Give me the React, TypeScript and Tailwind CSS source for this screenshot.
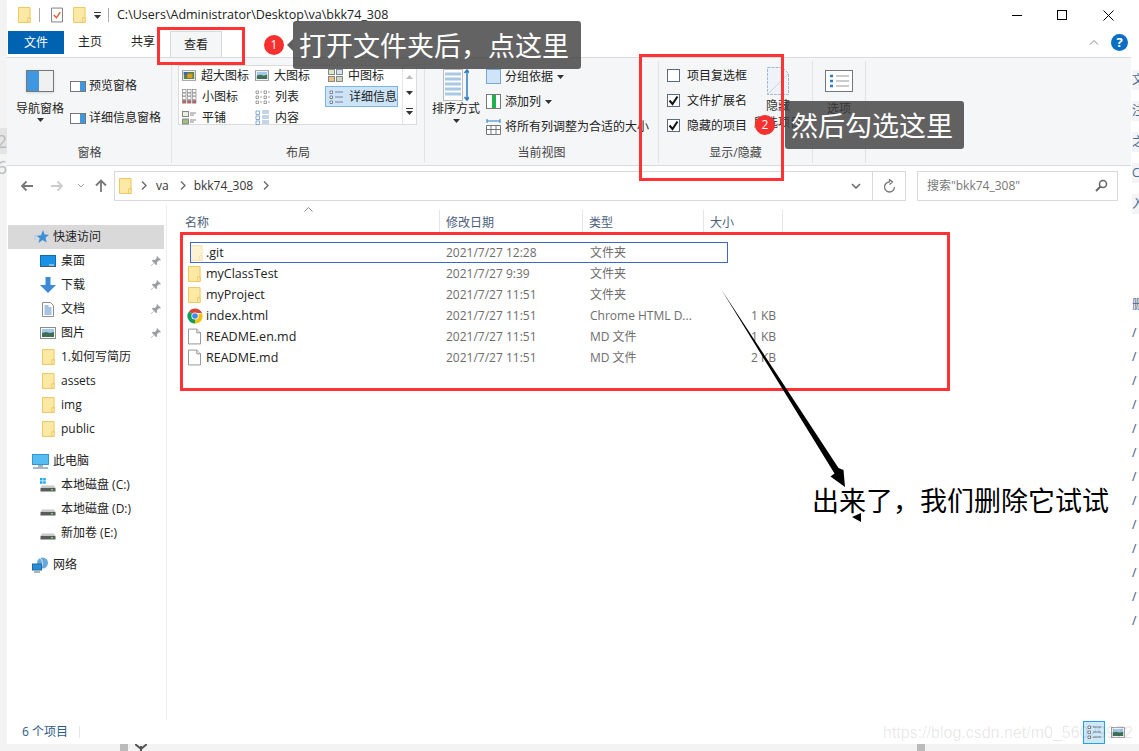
import React from "react";

const F = '[font-family:"Open_Sans","Noto_Sans_CJK_SC",sans-serif]';

const Folder = ({ faded = false }: { faded?: boolean }) => (
  <svg width="13" height="16" viewBox="0 0 14 17" className={faded ? "opacity-50 shrink-0" : "shrink-0"}>
    <path d="M.5.5h12.5v16H.5z" fill="#fde9a6" stroke="#eac451" />
    <path d="M10.5 16.5v-5h2.5v5z" fill="#fff3c8" stroke="#eac451" />
  </svg>
);
const FileIcon = () => (
  <svg width="13" height="17" viewBox="0 0 14 17" className="shrink-0">
    <path d="M.5.5h9l4 4v12H.5z" fill="#fff" stroke="#8f8f8f" />
    <path d="M9.5.5v4h4" fill="#eee" stroke="#8f8f8f" />
  </svg>
);
const Chrome = () => (
  <svg width="16" height="16" viewBox="0 0 16 16" className="shrink-0 ml-[-1px]">
    <path d="M8 8 2 3.4A7.6 7.6 0 0 1 15 5H8z" fill="#db4437" />
    <path d="M8 8 15 5a7.6 7.6 0 0 1-7 10.6z" fill="#f4c20d" />
    <path d="M8 8v7.6A7.6 7.6 0 0 1 2 3.4z" fill="#0f9d58" />
    <circle cx="8" cy="8" r="3.6" fill="#fff" />
    <circle cx="8" cy="8" r="2.8" fill="#4285f4" />
  </svg>
);
const Pin = () => (
  <svg width="12" height="12" viewBox="0 0 12 12" className="shrink-0">
    <path d="M7 1l4 4-1 .6-1-.4-2 2 .1 2-1 1-2-2.2L1.500 11 1 10.500l3-2.700L1.800 5.800l1-1 2 .1 2-2-.4-1z" fill="#9a9fa6" />
  </svg>
);
const Star = () => (
  <svg width="16" height="16" viewBox="0 0 16 16" className="shrink-0">
    <path d="M9 1l1.500 4.500 4.500.3-3.500 3 1.200 4.700L8.500 11 4.500 14l1.200-4.700-3-2.500 4.300-.6z" fill="#3c8fd8" />
    <path d="M0 7h3M0 10h2" stroke="#9cc7ec" />
  </svg>
);
const Desktop = () => (
  <svg width="16" height="13" viewBox="0 0 16 13" className="shrink-0">
    <rect x=".5" y=".5" width="15" height="11" fill="#1b90e4" stroke="#0b6cb4" />
    <path d="M1 11.500h14" stroke="#555" />
    <path d="M9 10h5" stroke="#d7efff" />
  </svg>
);
const Down = () => (
  <svg width="16" height="16" viewBox="0 0 16 16" className="shrink-0">
    <path d="M5.500 0h5v8H16l-8 8-8-8h5.500z" fill="#3a8ad8" />
  </svg>
);
const Doc = () => (
  <svg width="12" height="15" viewBox="0 0 12 15" className="shrink-0 ml-[2px]">
    <path d="M.5.500h8l3 3v11H.5z" fill="#fff" stroke="#8d8d8d" />
    <path d="M2.500 4h4M2.500 6h7M2.500 8h7M2.500 10h7M2.500 12h7" stroke="#4b87c7" />
  </svg>
);
const Pic = ({ w = 16, h = 12 }: { w?: number; h?: number }) => (
  <svg width={w} height={h} viewBox="0 0 16 12" className="shrink-0">
    <rect x=".5" y=".5" width="15" height="11" fill="#fff" stroke="#8d8d8d" />
    <rect x="2" y="2" width="12" height="4" fill="#9ec9e8" />
    <path d="M2 6l4-1 4 1 4-1v5H2z" fill="#3f6f57" />
  </svg>
);
const PC = () => (
  <svg width="17" height="15" viewBox="0 0 17 15" className="shrink-0">
    <rect x=".5" y=".5" width="16" height="10" fill="#55bdf2" stroke="#3b95cc" />
    <path d="M6 12h5M1 14h15" stroke="#8aa0b0" strokeWidth="1.300" />
    <path d="M8.500 10.500v2" stroke="#8aa0b0" />
  </svg>
);
const Drive = ({ win = false }: { win?: boolean }) => (
  <svg width="16" height="14" viewBox="0 0 16 14" className="shrink-0">
    {win && <path d="M0 0h2.500v2.500H0zM3.200 0h2.500v2.500H3.200zM0 3.200h2.500v2.500H0zM3.200 3.200h2.500v2.500H3.200z" fill="#19a8ee" />}
    <path d="M2 7.500h12l1.500 2.500H.5z" fill="#c8c8c8" />
    <rect x=".5" y="10" width="15" height="3.500" fill="#5b5b5b" />
    <rect x="11" y="11" width="2" height="1.500" fill="#5fe05f" />
  </svg>
);
const Net = () => (
  <svg width="17" height="16" viewBox="0 0 17 16" className="shrink-0">
    <circle cx="10.500" cy="6" r="5.500" fill="#68a9dc" />
    <path d="M8 1c3 2 3 7 1 10" stroke="#d8ecf8" fill="none" />
    <rect x=".5" y="7" width="9" height="6" fill="#2c8dd0" stroke="#1c6ca8" />
    <path d="M2 15h6" stroke="#667" />
  </svg>
);
const GridIcon = ({ kind }: { kind: string }) => {
  if (kind === "xl")
    return (
      <svg width="14" height="11" viewBox="0 0 16 12" className="shrink-0">
        <rect x=".5" y=".5" width="15" height="11" fill="#fff" stroke="#8d8d8d" />
        <rect x="2" y="2" width="12" height="8" fill="#5d7f4a" />
        <path d="M6 4h6v5H6z" fill="#d8a020" />
        <path d="M2 2h4v3H2z" fill="#3566b8" />
      </svg>
    );
  if (kind === "l") return <Pic w={14} h={11} />;
  if (kind === "m")
    return (
      <svg width="15" height="13" viewBox="0 0 15 13" className="shrink-0">
        <rect x=".5" y=".5" width="6" height="5" fill="#dbe8c8" stroke="#888" />
        <rect x="8.500" y=".5" width="6" height="5" fill="#cfe1f2" stroke="#888" />
        <rect x=".5" y="7.500" width="6" height="5" fill="#f0c080" stroke="#888" />
        <rect x="8.500" y="7.500" width="6" height="5" fill="#c9d8c0" stroke="#888" />
      </svg>
    );
  if (kind === "s")
    return (
      <svg width="15" height="15" viewBox="0 0 15 15" className="shrink-0">
        {[0, 1, 2, 3].flatMap((r) =>
          [0, 1, 2].map((c) => (
            <rect key={`${r}${c}`} x={c * 5 + 0.5} y={r * 3.6 + 0.5} width="3.500" height="2.800" fill={r === 3 ? "#c55" : "#fff"} stroke="#888" strokeWidth=".7" />
          ))
        )}
      </svg>
    );
  if (kind === "list")
    return (
      <svg width="15" height="14" viewBox="0 0 15 14" className="shrink-0">
        {[0, 1, 2].flatMap((r) =>
          [0, 8].map((c) => (
            <path key={`${r}${c}`} d={`M${c + 1} ${r * 5 + 1}h2.500v2.500H${c + 1}zM${c + 5} ${r * 5 + 2}h2`} fill="#fff" stroke="#888" strokeWidth=".8" />
          ))
        )}
      </svg>
    );
  if (kind === "detail")
    return (
      <svg width="15" height="14" viewBox="0 0 15 14" className="shrink-0">
        {[0, 1, 2].map((r) => (
          <path key={r} d={`M1 ${r * 5 + 1}h2.500v2.500H1zM6 ${r * 5 + 2}h8`} fill="#fff" stroke="#667" strokeWidth=".8" />
        ))}
      </svg>
    );
  if (kind === "tile")
    return (
      <svg width="15" height="14" viewBox="0 0 15 14" className="shrink-0">
        <rect x=".5" y=".5" width="6" height="5" fill="#e8efe0" stroke="#888" />
        <rect x=".5" y="8" width="6" height="5" fill="#9cc080" stroke="#888" />
        <path d="M8 2h6M8 4h4M8 9h6M8 11h4" stroke="#888" />
      </svg>
    );
  return (
    <svg width="15" height="15" viewBox="0 0 15 15" className="shrink-0">
      {[0, 1, 2].map((r) => (
        <path key={r} d={`M1 ${r * 5 + 1}h3.500v3.500H1zM7 ${r * 5 + 1}h7M7 ${r * 5 + 3}h7`} fill="#fff" stroke="#6d94c4" strokeWidth=".8" />
      ))}
    </svg>
  );
};

const Caret = () => (
  <svg width="7" height="4" viewBox="0 0 7 4" className="shrink-0">
    <path d="M0 0h7L3.500 4z" fill="#333" />
  </svg>
);

const Group = ({ w, label, children }: { w: string; label?: string; children: React.ReactNode }) => (
  <div className={`${w} shrink-0 flex flex-col h-[102px] mt-[3px] border-r border-[#e2e3e4]`}>
    <div className="h-[81px] flex">{children}</div>
    {label && <div className="h-[21px] flex items-center justify-center text-[#444] text-[12px] leading-none">{label}</div>}
  </div>
);

const Gallery = ({ kind, label, active = false }: { kind: string; label: string; active?: boolean }) => (
  <div className={`w-[73px] h-[21px] flex items-center gap-[5px] pl-[3px] text-[12px] leading-none text-[#222] whitespace-nowrap ${active ? "bg-[#cce4f7] border border-[#7fb4e6] pl-[2px]" : ""}`}>
    <GridIcon kind={kind} />
    <span>{label}</span>
  </div>
);

const Check = ({ checked, label }: { checked: boolean; label: string }) => (
  <div className="h-[25px] flex items-center gap-[7px] text-[12px] leading-none text-[#222]">
    <div className="w-[13px] h-[13px] border border-[#5c6a80] bg-white flex items-center justify-center">
      {checked && (
        <svg width="11" height="11" viewBox="0 0 11 11">
          <path d="M1.500 5.500l3 3.500 5-7.500" fill="none" stroke="#111" strokeWidth="2" />
        </svg>
      )}
    </div>
    <span>{label}</span>
  </div>
);

const Side = ({ icon, label, pin = false, indent = "pl-[33px]", col = "w-[21px]" }: { icon: React.ReactNode; label: string; pin?: boolean; indent?: string; col?: string }) => (
  <div className={`h-[24px] flex items-center ${indent} pr-[4px] text-[12px] leading-none text-[#222] whitespace-nowrap`}>
    <div className={`${col} flex items-center justify-start`}>{icon}</div>
    <span className="flex-1">{label}</span>
    {pin && <Pin />}
  </div>
);

const rows = [
  { n: ".git", d: "2021/7/27 12:28", t: "文件夹", s: "", i: <Folder faded /> },
  { n: "myClassTest", d: "2021/7/27 9:39", t: "文件夹", s: "", i: <Folder /> },
  { n: "myProject", d: "2021/7/27 11:51", t: "文件夹", s: "", i: <Folder /> },
  { n: "index.html", d: "2021/7/27 11:51", t: "Chrome HTML D...", s: "1 KB", i: <Chrome /> },
  { n: "README.en.md", d: "2021/7/27 11:51", t: "MD 文件", s: "1 KB", i: <FileIcon /> },
  { n: "README.md", d: "2021/7/27 11:51", t: "MD 文件", s: "2 KB", i: <FileIcon /> },
];

const Chevron = () => (
  <svg width="6" height="9" viewBox="0 0 6 9" className="shrink-0">
    <path d="M1 .5l4 4-4 4" fill="none" stroke="#666" strokeWidth="1.300" />
  </svg>
);

const Col = ({ w, label }: { w: string; label: string }) => (
  <div className={`${w} h-[25px] border-r border-[#e5e5e5] pl-[6px] flex items-center text-[12px] leading-none text-[#4c607a]`}>{label}</div>
);

export default function App() {
  return (
    <div className={`w-[1139px] h-[751px] relative overflow-hidden bg-[#f3f3f3] flex flex-col ${F}`}>
      <div className="h-[744px] flex">
        {/* left strip */}
        <div className="w-[7px] shrink-0 pt-[128px] text-[18px] leading-[26px] text-[#bbb] overflow-hidden flex flex-col items-end">
          <div className="bg-[#e4e4e4]">2</div>
          <div>6</div>
        </div>
        {/* window */}
        <div className="w-[1124px] shrink-0 bg-white flex flex-col">
          <div className="h-[30px] flex items-center pl-[11px] text-[12.5px] leading-none text-[#222]">
            <Folder />
            <div className="w-px h-[14px] bg-[#aaa] ml-[8px] mr-[11px]" />
            <svg width="12" height="16" viewBox="0 0 13 16" className="shrink-0">
              <path d="M.5.500h12v15H.5z" fill="#fff" stroke="#777" />
              <path d="M3 8l3 3 4-6" fill="none" stroke="#e0562a" strokeWidth="1.500" />
            </svg>
            <div className="w-[10px]" />
            <Folder />
            <div className="ml-[8px] flex flex-col gap-[2px] items-center">
              <div className="w-[7px] h-px bg-[#333]" />
              <Caret />
            </div>
            <div className="w-px h-[14px] bg-[#aaa] ml-[7px] mr-[8px]" />
            <span>C:\Users\Administrator\Desktop\va\bkk74_308</span>
            <div className="flex-1" />
            <div className="w-[45px] flex justify-center"><div className="w-[10px] h-px bg-black" /></div>
            <div className="w-[46px] flex justify-center"><div className="w-[10px] h-[10px] border border-black" /></div>
            <div className="w-[46px] flex justify-center">
              <svg width="11" height="11" viewBox="0 0 11 11"><path d="M.5.500l10 10M10.500.500l-10 10" stroke="#000" /></svg>
            </div>
          </div>
          {/* tabs */}
          <div className="h-[27px] flex items-start text-[12px] leading-none">
            <div className="w-[56px] h-[23px] mt-px ml-px bg-[#0063b1] text-white flex items-center justify-center">文件</div>
            <div className="w-[52px] h-[24px] flex items-center justify-center text-[#222]">主页</div>
            <div className="w-[54px] h-[24px] flex items-center justify-center text-[#222]">共享</div>
            <div className="w-[52px] h-[27px] mt-px bg-[#f5f6f7] border border-b-0 border-[#dadbdc] flex items-center justify-center text-[#222]">查看</div>
            <div className="flex-1" />
            <div className="h-[24px] flex items-center gap-[12px] mr-[3px]">
              <svg width="10" height="6" viewBox="0 0 10 6"><path d="M1 5.500l4-4 4 4" fill="none" stroke="#888" /></svg>
              <div className="w-[17px] h-[17px] rounded-full bg-[#0a6fc2] text-white text-[13px] font-bold flex items-center justify-center">?</div>
            </div>
          </div>
          {/* ribbon */}
          <div className="h-[109px] bg-[#f5f6f7] border-t border-b border-[#dadbdc] flex pl-px">
            <Group w="w-[164px]" label="窗格">
              <div className="w-[64px] shrink-0 flex flex-col items-center pt-[9px] text-[12px] leading-none text-[#222]">
                <div className="w-[28px] h-[22px] border border-[#777] flex bg-white shadow-sm">
                  <div className="w-[12px] bg-[#3f97e0]" />
                  <div className="flex-1 bg-[#f0f0f0]" />
                </div>
                <div className="mt-[11px] whitespace-nowrap">导航窗格</div>
                <div className="mt-[3px]"><Caret /></div>
              </div>
              <div className="flex flex-col pt-[15px] ml-[-2px] gap-[12px] text-[12px] leading-none text-[#222]">
                <div className="h-[20px] flex items-center gap-[3px]">
                  <div className="w-[16px] h-[11px] border border-[#777] bg-white flex justify-end"><div className="w-[5px] bg-[#3f97e0]" /></div>
                  <span>预览窗格</span>
                </div>
                <div className="h-[20px] flex items-center gap-[3px]">
                  <div className="w-[16px] h-[11px] border border-[#777] bg-white flex justify-end"><div className="w-[5px] bg-[#3f97e0]" /></div>
                  <span>详细信息窗格</span>
                </div>
              </div>
            </Group>
            <Group w="w-[253px]" label="布局">
              <div className="ml-[6px] mt-[4px] w-[239px] h-[60px] border border-[#dcdcdc] bg-white flex">
                <div className="w-[223px] flex flex-wrap content-start mt-[-1px]">
                  <Gallery kind="xl" label="超大图标" />
                  <Gallery kind="l" label="大图标" />
                  <Gallery kind="m" label="中图标" />
                  <Gallery kind="s" label="小图标" />
                  <Gallery kind="list" label="列表" />
                  <Gallery kind="detail" label="详细信息" active />
                  <Gallery kind="tile" label="平铺" />
                  <Gallery kind="content" label="内容" />
                </div>
                <div className="flex-1 border-l border-[#e6e6e6] flex flex-col items-center justify-around py-[3px]">
                  <svg width="7" height="4" viewBox="0 0 7 4"><path d="M0 4h7L3.500 0z" fill="#bbb" /></svg>
                  <Caret />
                  <div className="flex flex-col items-center gap-[2px]"><div className="w-[7px] h-px bg-[#333]" /><Caret /></div>
                </div>
              </div>
            </Group>
            <Group w="w-[234px]" label="当前视图">
              <div className="w-[62px] shrink-0 flex flex-col items-center pt-[8px] text-[12px] leading-none text-[#222]">
                <svg width="26" height="37" viewBox="0 0 26 37">
                  <rect x=".5" y=".5" width="19" height="31" fill="#fff" stroke="#bbb" />
                  <path d="M2 5h16M2 10h16M2 15h16M2 20h16M2 25h16" stroke="#a9c8e6" strokeWidth="3" />
                  <path d="M24 1v30M21.500 4L24 1l2.500 3M21.500 28L24 31l2.500-3" fill="none" stroke="#2b7cc4" strokeWidth="1.500" />
                </svg>
                <div className="mt-[-3px] whitespace-nowrap">排序方式</div>
                <div className="mt-[4px]"><Caret /></div>
              </div>
              <div className="flex flex-col ml-[-1px] text-[12px] leading-none text-[#222] whitespace-nowrap pt-[3px]">
                <div className="h-[25px] flex items-center gap-[4px]">
                  <div className="w-[15px] h-[15px] border border-[#7ba6d0] bg-[#cfe4f7]" />
                  <span>分组依据</span>
                  <Caret />
                </div>
                <div className="h-[25px] flex items-center gap-[4px]">
                  <div className="w-[15px] h-[15px] border border-[#777] bg-white flex justify-center"><div className="w-[4px] bg-[#22b14c]" /></div>
                  <span>添加列</span>
                  <Caret />
                </div>
                <div className="h-[25px] flex items-center gap-[4px]">
                  <svg width="15" height="17" viewBox="0 0 15 17" className="shrink-0">
                    <path d="M1 3h13M1 1v4M14 1v4" stroke="#2b7cc4" fill="none" />
                    <path d="M.5 7.500h14v9H.5zM.5 11.500h14M5 7.500v9M10 7.500v9" stroke="#777" fill="#fff" />
                  </svg>
                  <span>将所有列调整为合适的大小</span>
                </div>
              </div>
            </Group>
            <Group w="w-[154px]" label="显示/隐藏">
              <div className="pl-[8px] pt-[2px] w-[98px] shrink-0 whitespace-nowrap">
                <Check checked={false} label="项目复选框" />
                <Check checked label="文件扩展名" />
                <Check checked label="隐藏的项目" />
              </div>
              <div className="w-[42px] shrink-0 flex flex-col items-center pt-[6px] text-[12px] leading-[17px] text-[#333] whitespace-nowrap">
                <svg width="22" height="28" viewBox="0 0 22 28" className="shrink-0">
                  <path d="M.5.500h15l6 6v21H.5z" fill="#eef3fa" stroke="#aab8cc" strokeDasharray="3 1" />
                  <path d="M1 27L21 7" stroke="#c8d4e4" />
                </svg>
                <div className="mt-[2px]">隐藏</div>
                <div>所选项目</div>
              </div>
            </Group>
            <Group w="w-[53px]">
              <div className="w-full flex flex-col items-center pt-[9px] text-[12px] leading-none text-[#222]">
                <svg width="28" height="22" viewBox="0 0 28 22">
                  <rect x=".5" y=".5" width="27" height="21" fill="#fff" stroke="#777" />
                  <path d="M5 6h3M5 11h3M5 16h3" stroke="#2b7cc4" strokeWidth="2.500" />
                  <path d="M11 6h13M11 11h13M11 16h13" stroke="#999" />
                </svg>
                <div className="mt-[11px]">选项</div>
              </div>
            </Group>
          </div>
          {/* address */}
          <div className="h-[39px] flex items-center text-[12px] leading-none">
            <div className="w-[107px] flex items-center pl-[13px] shrink-0">
              <svg width="14" height="12" viewBox="0 0 14 12" className="shrink-0"><path d="M13 6H2M6.500 1.500L2 6l4.500 4.500" fill="none" stroke="#777" strokeWidth="1.800" /></svg>
              <svg width="14" height="12" viewBox="0 0 14 12" className="ml-[16px] shrink-0"><path d="M1 6h11M7.500 1.500L12 6l-4.500 4.500" fill="none" stroke="#ccc" strokeWidth="1.800" /></svg>
              <svg width="8" height="5" viewBox="0 0 8 5" className="ml-[13px] shrink-0"><path d="M1 1l3 3 3-3" fill="none" stroke="#aaa" /></svg>
              <svg width="12" height="13" viewBox="0 0 12 13" className="ml-[10px] shrink-0"><path d="M6 13V2M1 6.500L6 1.500l5 5" fill="none" stroke="#777" strokeWidth="1.800" /></svg>
            </div>
            <div className="w-[792px] h-[30px] border border-[#d9d9d9] flex items-center pl-[4px] text-[#333] shrink-0">
              <Folder />
              <div className="ml-[9px]"><Chevron /></div>
              <span className="ml-[9px]">va</span>
              <div className="ml-[11px]"><Chevron /></div>
              <span className="ml-[8px]">bkk74_308</span>
              <div className="ml-[10px]"><Chevron /></div>
              <div className="flex-1" />
              <div className="w-[34px] flex justify-center border-r border-[#d9d9d9] h-full items-center">
                <svg width="10" height="6" viewBox="0 0 10 6"><path d="M1 1l4 4 4-4" fill="none" stroke="#666" strokeWidth="1.500" /></svg>
              </div>
              <div className="w-[32px] flex justify-center">
                <svg width="13" height="14" viewBox="0 0 13 14"><path d="M6.500 3a5 5 0 1 0 5 5M6.500 3V.5l3 2.500-3 2.500" fill="none" stroke="#777" strokeWidth="1.300" /></svg>
              </div>
            </div>
            <div className="w-[201px] h-[30px] ml-[11px] border border-[#d9d9d9] flex items-center justify-between px-[9px] text-[#777] shrink-0">
              <span>搜索"bkk74_308"</span>
              <svg width="13" height="13" viewBox="0 0 13 13"><circle cx="8" cy="5" r="3.500" fill="none" stroke="#666" strokeWidth="1.500" /><path d="M5.500 7.500L1 12" stroke="#666" strokeWidth="2" /></svg>
            </div>
          </div>
          {/* body */}
          <div className="flex-1 flex min-h-0">
            <div className="w-[160px] shrink-0 border-r border-[#eee] pt-[20px]">
              <div className="h-[24px] bg-[#d9d9d9] w-[156px] ml-px flex items-center pl-[26px] text-[12px] leading-none text-[#222]">
                <div className="w-[19px]"><Star /></div>
                <span>快速访问</span>
              </div>
              <Side icon={<Desktop />} label="桌面" pin />
              <Side icon={<Down />} label="下载" pin />
              <Side icon={<Doc />} label="文档" pin />
              <Side icon={<Pic />} label="图片" pin />
              <Side icon={<Folder />} label="1.如何写简历" indent="pl-[35px]" col="w-[19px]" />
              <Side icon={<Folder />} label="assets" indent="pl-[35px]" col="w-[19px]" />
              <Side icon={<Folder />} label="img" indent="pl-[35px]" col="w-[19px]" />
              <Side icon={<Folder />} label="public" indent="pl-[35px]" col="w-[19px]" />
              <div className="h-[8px]" />
              <Side icon={<PC />} label="此电脑" indent="pl-[25px]" />
              <Side icon={<Drive win />} label="本地磁盘 (C:)" />
              <Side icon={<Drive />} label="本地磁盘 (D:)" />
              <Side icon={<Drive />} label="新加卷 (E:)" />
              <div className="h-[8px]" />
              <Side icon={<Net />} label="网络" indent="pl-[25px]" />
            </div>
            <div className="flex-1 min-w-0">
              <div className="flex h-[30px] pl-[13px] items-end">
                <div className="w-[260px] h-[25px] relative border-r border-[#e5e5e5] pl-[5px] flex items-center text-[12px] leading-none text-[#4c607a]">
                  名称
                  <svg width="9" height="5" viewBox="0 0 9 5" className="absolute left-[124px] top-[-3px]"><path d="M.5 4.500l4-4 4 4" fill="none" stroke="#888" /></svg>
                </div>
                <Col w="w-[143px]" label="修改日期" />
                <Col w="w-[121px]" label="类型" />
                <Col w="w-[79px]" label="大小" />
              </div>
              <div className="pt-[7px] pl-[21px]">
                {rows.map((r, i) => (
                  <div key={r.n} className="relative h-[21px] w-[588px] flex items-center text-[12px] leading-none whitespace-nowrap">
                    <div className={`w-[18px] shrink-0 flex justify-start ${i === 0 ? "pl-[2px]" : ""}`}>{r.i}</div>
                    <div className="w-[240px] text-[#222] text-[12.5px] pt-[2px]">{r.n}</div>
                    <div className="w-[144px] text-[#6d6d6d]">{r.d}</div>
                    <div className="w-[110px] text-[#6d6d6d]">{r.t}</div>
                    <div className="w-[76px] text-right text-[#6d6d6d]">{r.s}</div>
                    {i === 0 && <div className="absolute left-[2px] top-0 w-[538px] h-[21px] border border-[#3b68c9]" />}
                  </div>
                ))}
              </div>
            </div>
          </div>
          {/* status */}
          <div className="h-[24px] flex items-center pl-[15px] text-[12px] leading-none text-[#2d5a88]">
            <span>6 个项目</span>
            <div className="w-px h-[12px] bg-[#e5e5e5] ml-[11px]" />
            <div className="flex-1" />
            <div className="w-[22px] h-[23px] border border-[#27a2e0] bg-[#cde8f7] flex items-center justify-center"><GridIcon kind="detail" /></div>
            <div className="w-[25px] flex justify-center"><Pic w={14} h={11} /></div>
            <div className="w-[1px]" />
          </div>
        </div>
        {/* right strip */}
        <div className="w-[8px] shrink-0 bg-white text-[12px] leading-none text-[#4a6a90] overflow-hidden pl-px pt-[70px]">
          {["文", "注", "之", "C", "入"].map((c) => (
            <div key={c} className="h-[20px] mb-[11px] bg-[#f2f4f8] flex items-center">{c}</div>
          ))}
          <div className="mt-[79px] h-[24px] flex items-center">删</div>
          <div className="mt-[4px]">
            {Array.from({ length: 13 }).map((_, i) => (
              <div key={i} className="h-[24px] flex items-center text-[#33507a]">/</div>
            ))}
          </div>
        </div>
      </div>
      {/* bottom strip */}
      <div className="h-[7px] flex bg-[#f3f3f3]">
        <div className="w-[120px]" />
        <div className="w-[8px] bg-[#bbb]" />
        <div className="w-[7px]" />
        <svg width="12" height="7" viewBox="0 0 12 7"><path d="M0 0l6 5 6-5M6 2v5" fill="none" stroke="#555" strokeWidth="2" /></svg>
        <div className="w-[770px]" />
        <div className="w-[8px] bg-[#bbb]" />
      </div>

      {/* annotations */}
      <div className="absolute left-[157px] top-[27px] w-[88px] h-[38px] border-[3px] border-[#ff3333]" />
      <div className="absolute left-[639px] top-[54px] w-[145px] h-[127px] border-[3px] border-[#ff3333]" />
      <div className="absolute left-[180px] top-[232px] w-[770px] h-[159px] border-[3px] border-[#ff3333]" />
      <div className="absolute left-[264px] top-[35px] w-[20px] h-[20px] rounded-full bg-[#f5302f] text-white text-[12px] leading-none flex items-center justify-center">1</div>
      <div className="absolute left-[755px] top-[115px] w-[20px] h-[20px] rounded-full bg-[#f5302f] text-white text-[12px] leading-none flex items-center justify-center">2</div>
      <div className="absolute left-[293px] top-[21px] w-[288px] h-[48px] rounded-[3px] bg-[#3c3c3c]/80 text-white text-[27px] leading-none flex items-center pl-[6px] whitespace-nowrap">打开文件夹后，点这里</div>
      <div className="absolute left-[287px] top-[39px] w-0 h-0 border-y-[6px] border-y-transparent border-r-[6px] border-r-[#5f5f5f]" />
      <div className="absolute left-[785px] top-[101px] w-[179px] h-[48px] rounded-[3px] bg-[#3c3c3c]/80 text-white text-[27px] leading-none flex items-center pl-[6px] whitespace-nowrap">然后勾选这里</div>
      <svg className="absolute left-[700px] top-[280px]" width="180" height="250" viewBox="700 280 180 250">
        <path d="M721 289 L838.500 468 L843.500 470 L845 487 L830.500 476.500 L834.500 473.500 Z" fill="#000" />
        <path d="M852 517 L861 513 L861 522 Z" fill="#000" />
      </svg>
      <div className="absolute left-[812px] top-[484px] text-[27px] leading-[34px] text-black whitespace-nowrap">出来了，我们删除它试试</div>
      <div className="absolute left-[883px] top-[723px] text-[16px] leading-[20px] text-black/10 whitespace-nowrap [font-family:'Liberation_Sans',sans-serif]">https://blog.csdn.net/m0_56029972</div>
    </div>
  );
}
